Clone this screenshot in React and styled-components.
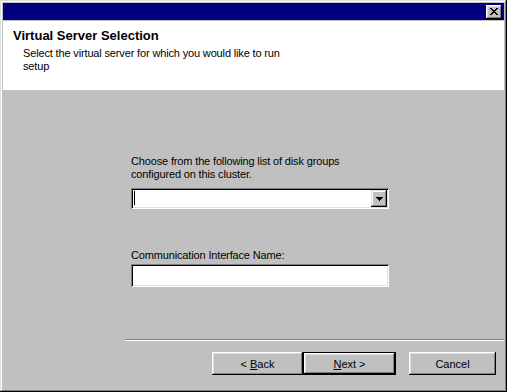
import React from "react";
import styled, { createGlobalStyle } from "styled-components";

const GlobalStyle = createGlobalStyle`
  * {
    margin: 0;
    padding: 0;
    box-sizing: border-box;
  }

  html, body {
    margin: 0;
    background: #c0c0c0;
    font-family: "Liberation Sans", Arial, sans-serif;
    font-size: 11px;
    color: #000;
  }
`;

// Win95 style window frame
const Window = styled.div`
  width: 507px;
  height: 392px;
  padding: 3px;
  display: flex;
  flex-direction: column;
  background: #c0c0c0;
  box-shadow: inset -1px -1px #000, inset 1px 1px #dfdfdf,
    inset -2px -2px #808080, inset 2px 2px #fff;
`;

const TitleBar = styled.div`
  height: 17px;
  background: #000080;
  display: flex;
  align-items: center;
  justify-content: flex-end;
  padding-right: 2px;
`;

const CloseButton = styled.button`
  width: 16px;
  height: 14px;
  background: #c0c0c0;
  border: none;
  display: flex;
  align-items: center;
  justify-content: center;
  box-shadow: inset -1px -1px #000, inset 1px 1px #fff,
    inset -2px -2px #808080, inset 2px 2px #dfdfdf;
`;

const Header = styled.div`
  margin-top: 1px;
  height: 69px;
  background: #fff;
  padding: 7px 0 0 10px;
`;

const Title = styled.h1`
  font-size: 13px;
  font-weight: 700;
  line-height: 16px;
`;

const Subtitle = styled.p`
  margin: 3px 0 0 10px;
  max-width: 275px;
  line-height: 13px;
  letter-spacing: -0.15px;
`;

const Body = styled.div`
  flex: 1;
  display: flex;
  flex-direction: column;
`;

const Form = styled.div`
  padding: 65px 0 0 128px;
  display: flex;
  flex-direction: column;
  flex: 1;
`;

const Label = styled.label`
  display: block;
  line-height: 13px;
  letter-spacing: -0.15px;
  max-width: ${(p) => p.$wrap || "none"};
  margin-top: ${(p) => p.$top || 0}px;
`;

const Sunken = styled.div`
  width: 258px;
  height: ${(p) => p.$h}px;
  margin-top: ${(p) => p.$top}px;
  background: #fff;
  padding: 2px;
  display: flex;
  align-items: stretch;
  box-shadow: inset 1px 1px #808080, inset -1px -1px #fff,
    inset 2px 2px #000, inset -2px -2px #dfdfdf;
`;

const Caret = styled.div`
  flex: 0 0 1px;
  margin: 1px 0 2px 1px;
  background: #000;
`;

const Field = styled.div`
  flex: 1;
`;

const DropButton = styled.div`
  width: 16px;
  background: #c0c0c0;
  display: flex;
  align-items: center;
  justify-content: center;
  box-shadow: inset -1px -1px #000, inset 1px 1px #dfdfdf,
    inset -2px -2px #808080, inset 2px 2px #fff;
`;

const Separator = styled.div`
  margin-left: 122px;
  height: 2px;
  border-top: 1px solid #808080;
  border-bottom: 1px solid #fff;
`;

const ButtonRow = styled.div`
  display: flex;
  justify-content: flex-end;
  padding: 11px 8px 14px 0;
`;

const Button = styled.button`
  width: ${(p) => p.$w}px;
  height: 23px;
  margin-left: ${(p) => p.$gap || 0}px;
  background: #c0c0c0;
  border: none;
  font-family: "Liberation Sans", Arial, sans-serif;
  font-size: 11px;
  color: #000;
  box-shadow: ${(p) =>
    p.$default
      ? "inset 1px 1px #000, inset -1px -1px #000, inset -2px -2px #000, inset 2px 2px #fff, inset -3px -3px #808080, inset 3px 3px #dfdfdf"
      : "inset -1px -1px #000, inset 1px 1px #fff, inset -2px -2px #808080, inset 2px 2px #dfdfdf"};

  u {
    text-decoration: underline;
  }
`;

export default function App() {
  return (
    <>
      <GlobalStyle />
      <Window>
        <TitleBar>
          <CloseButton aria-label="Close">
            <svg width="8" height="7" viewBox="0 0 8 7">
              <path
                d="M0 0h2v1h1v1h2V1h1V0h2v1H7v1H6v1H5v1h1v1h1v1h1v1H6V6H5V5H3v1H2v1H0V6h1V5h1V4h1V3H2V2H1V1H0z"
                fill="#000"
              />
            </svg>
          </CloseButton>
        </TitleBar>

        <Header>
          <Title>Virtual Server Selection</Title>
          <Subtitle>
            Select the virtual server for which you would like to run setup
          </Subtitle>
        </Header>

        <Body>
          <Form>
            <Label $wrap="240px">
              Choose from the following list of disk groups configured on this
              cluster.
            </Label>
            <Sunken $h={21} $top={7}>
              <Caret />
              <Field />
              <DropButton>
                <svg width="7" height="4" viewBox="0 0 7 4">
                  <path d="M0 0h7v1H6v1H5v1H4v1H3V3H2V2H1V1H0z" fill="#000" />
                </svg>
              </DropButton>
            </Sunken>
            <Label $top={40}>Communication Interface Name:</Label>
            <Sunken $h={23} $top={2}>
              <Field />
            </Sunken>
          </Form>
          <Separator />
          <ButtonRow>
            <Button $w={91}>
              &lt; <u>B</u>ack
            </Button>
            <Button $w={93} $default>
              <u>N</u>ext &gt;
            </Button>
            <Button $w={87} $gap={13}>
              Cancel
            </Button>
          </ButtonRow>
        </Body>
      </Window>
    </>
  );
}
